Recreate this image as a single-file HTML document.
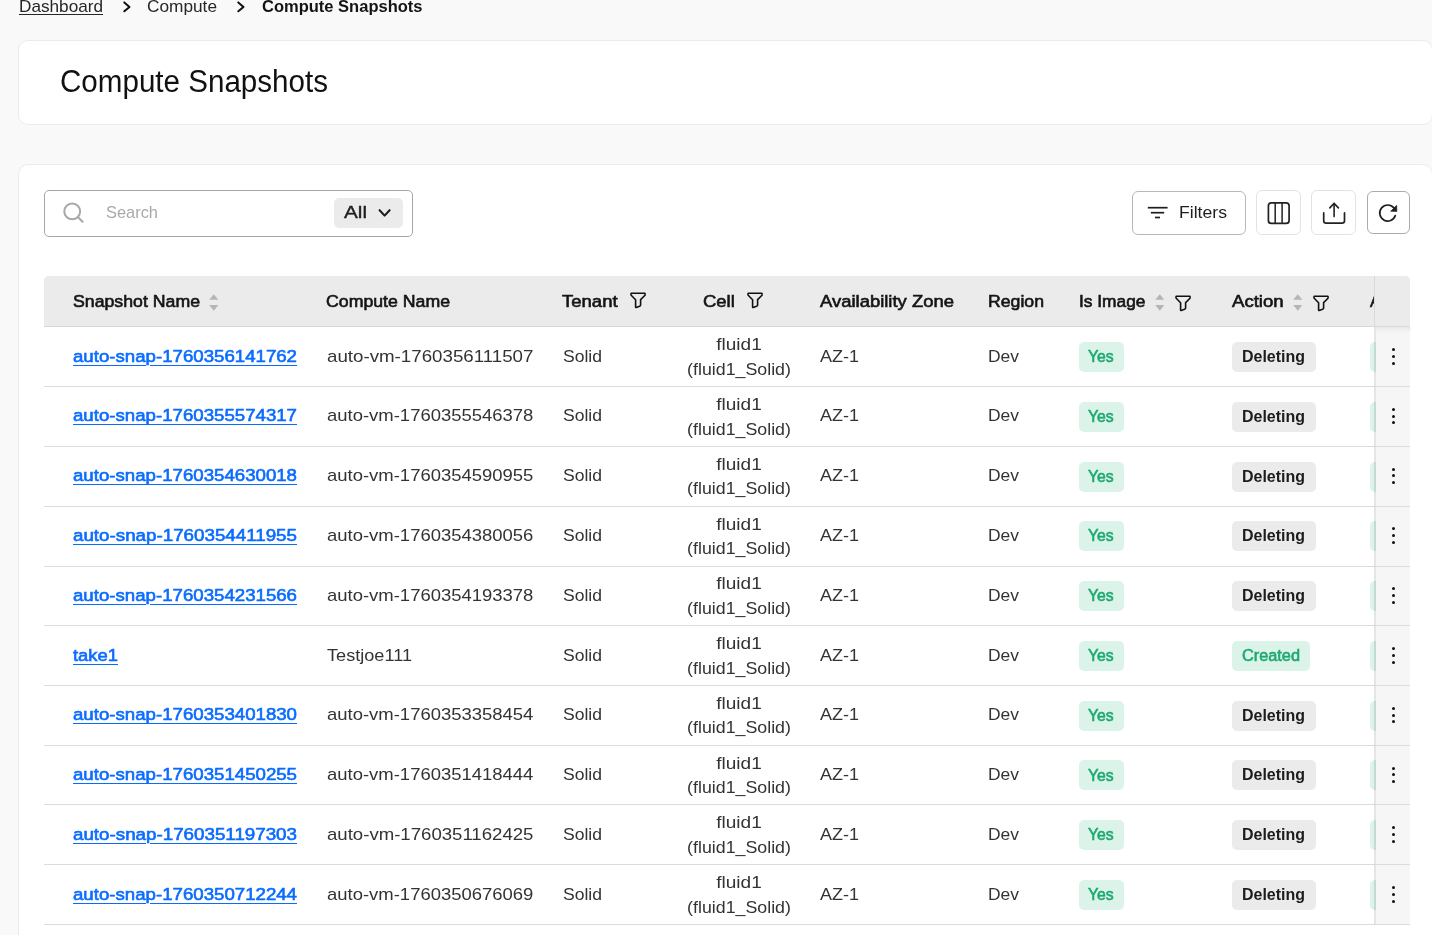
<!DOCTYPE html>
<html><head><meta charset="utf-8"><style>
html,body{margin:0;padding:0}
body{width:1432px;height:935px;overflow:hidden;position:relative;background:#f9f9f9;font-family:"Liberation Sans",sans-serif}
.t{position:absolute;white-space:nowrap;line-height:20px;font-family:"Liberation Sans",sans-serif}
.card{position:absolute;left:18px;width:1413px;background:#fff;border:1px solid #ebebeb;border-radius:10px}
.box{position:absolute;box-sizing:border-box;background:#fff}
.ic{position:absolute;overflow:visible}
.hl{position:absolute;left:44px;width:1331px;height:1px;background:#dcdcdc}
.hl2{position:absolute;left:0;width:34px;height:1px;background:#dcdcdc}
.bd{position:absolute;height:30px;border-radius:5px}
.g{background:#dcf3e9}
.k{background:#ebebeb}
.dot{position:absolute;left:16.2px;width:3px;height:3px;border-radius:50%;background:#111}
</style></head><body>
<svg class="ic" style="left:0;top:0" width="300" height="20"><polyline points="124.3,2.4 129.5,6.9 124.3,11.3" fill="none" stroke="#111" stroke-width="2" stroke-linecap="round" stroke-linejoin="round"/><polyline points="238.3,2.4 243.5,6.9 238.3,11.3" fill="none" stroke="#111" stroke-width="2" stroke-linecap="round" stroke-linejoin="round"/></svg>
<div class="card" style="top:40px;height:83px"></div>
<div class="card" style="top:164px;height:900px"></div>
<!-- search -->
<div class="box" style="left:44px;top:190px;width:369px;height:47px;border:1px solid #a6a6a6;border-radius:5px"></div>
<svg class="ic" style="left:0;top:0" width="100" height="240"><circle cx="72.2" cy="211.4" r="7.9" fill="none" stroke="#a8a8a8" stroke-width="2"/><line x1="78" y1="217.2" x2="82.6" y2="221.8" stroke="#a8a8a8" stroke-width="2" stroke-linecap="round"/></svg>
<div class="box" style="left:334px;top:198px;width:69px;height:30px;background:#ebebeb;border-radius:5px"></div>
<svg class="ic" style="left:370px;top:200px" width="30" height="25"><polyline points="9.6,10.2 14.6,15.6 19.6,10.2" fill="none" stroke="#1e1e1e" stroke-width="2.1" stroke-linecap="round" stroke-linejoin="round"/></svg>
<!-- buttons -->
<div class="box" style="left:1132px;top:191px;width:114px;height:44px;border:1px solid #b8b8b8;border-radius:6px"></div>
<svg class="ic" style="left:1140px;top:200px" width="40" height="25"><line x1="7.8" y1="7.7" x2="27.6" y2="7.7" stroke="#1e1e1e" stroke-width="1.7"/><line x1="10.8" y1="12.7" x2="24.2" y2="12.7" stroke="#1e1e1e" stroke-width="1.7"/><line x1="15" y1="17.5" x2="20" y2="17.5" stroke="#1e1e1e" stroke-width="1.7"/></svg>
<div class="box" style="left:1256px;top:190px;width:45px;height:45px;border:1px solid #e3e3e3;border-radius:6px"></div>
<svg class="ic" style="left:1256px;top:190px" width="45" height="45"><rect x="12.4" y="12.8" width="20.7" height="20.6" rx="3" fill="none" stroke="#222" stroke-width="1.7"/><line x1="19.2" y1="12.8" x2="19.2" y2="33.4" stroke="#222" stroke-width="1.5"/><line x1="26.1" y1="12.8" x2="26.1" y2="33.4" stroke="#222" stroke-width="1.5"/></svg>
<div class="box" style="left:1311px;top:190px;width:45px;height:45px;border:1px solid #e3e3e3;border-radius:6px"></div>
<svg class="ic" style="left:1311px;top:190px" width="45" height="45"><path d="M12.7 22.9 V30.8 Q12.7 33.2 15.2 33.2 H31 Q33.5 33.2 33.5 30.8 V22.9" fill="none" stroke="#222" stroke-width="1.7" stroke-linecap="round"/><line x1="23.1" y1="13.6" x2="23.1" y2="26.6" stroke="#222" stroke-width="1.6" stroke-linecap="round"/><polyline points="18.8,17.9 23.1,13.4 27.4,17.9" fill="none" stroke="#222" stroke-width="1.6" stroke-linecap="round" stroke-linejoin="round"/></svg>
<div class="box" style="left:1367px;top:191px;width:43px;height:43px;border:1px solid #ababab;border-radius:6px"></div>
<svg class="ic" style="left:1367px;top:191px" width="43" height="43"><path d="M26.9 16.9 A8 8 0 1 0 28.3 24.6" fill="none" stroke="#1e1e1e" stroke-width="1.7" stroke-linecap="round"/><path d="M23.6 20.3 L29.9 20.4 L29.7 14.3 Z" fill="#1e1e1e" stroke="#1e1e1e" stroke-width="0.6" stroke-linejoin="round"/></svg>
<!-- table header -->
<div class="box" style="left:44px;top:276px;width:1366px;height:51px;background:#ebebeb;border-radius:5px 5px 0 0;border-bottom:1px solid #d8d8d8"></div>
<svg class="ic" style="left:209px;top:293px" width="10" height="19" viewBox="0 0 10 19"><path d="M0.2 6.7 L4.8 1.2 L9.3 6.7 Z M0.2 12 L4.8 17.7 L9.3 12 Z" fill="#b5b5b5"/></svg><svg class="ic" style="left:1155px;top:293px" width="10" height="19" viewBox="0 0 10 19"><path d="M0.2 6.7 L4.8 1.2 L9.3 6.7 Z M0.2 12 L4.8 17.7 L9.3 12 Z" fill="#b5b5b5"/></svg><svg class="ic" style="left:1293px;top:293px" width="10" height="19" viewBox="0 0 10 19"><path d="M0.2 6.7 L4.8 1.2 L9.3 6.7 Z M0.2 12 L4.8 17.7 L9.3 12 Z" fill="#b5b5b5"/></svg>
<svg class="ic" style="left:629px;top:291px" width="18" height="18" viewBox="0 0 18 18"><path d="M2.2 2.3 H15.8 Q16.4 2.6 16 4.2 L11.6 8.6 V14.2 Q11.5 15 10.6 15.3 L7.2 16.4 Q6.6 16.5 6.6 15.9 V8.7 L2.2 4.3 Q1.6 3 2.2 2.3 Z" fill="none" stroke="#111" stroke-width="1.6" stroke-linejoin="round"/></svg><svg class="ic" style="left:746px;top:291px" width="18" height="18" viewBox="0 0 18 18"><path d="M2.2 2.3 H15.8 Q16.4 2.6 16 4.2 L11.6 8.6 V14.2 Q11.5 15 10.6 15.3 L7.2 16.4 Q6.6 16.5 6.6 15.9 V8.7 L2.2 4.3 Q1.6 3 2.2 2.3 Z" fill="none" stroke="#111" stroke-width="1.6" stroke-linejoin="round"/></svg><svg class="ic" style="left:1174px;top:294.3px" width="18" height="18" viewBox="0 0 18 18"><path d="M2.2 2.3 H15.8 Q16.4 2.6 16 4.2 L11.6 8.6 V14.2 Q11.5 15 10.6 15.3 L7.2 16.4 Q6.6 16.5 6.6 15.9 V8.7 L2.2 4.3 Q1.6 3 2.2 2.3 Z" fill="none" stroke="#111" stroke-width="1.6" stroke-linejoin="round"/></svg><svg class="ic" style="left:1312px;top:294.3px" width="18" height="18" viewBox="0 0 18 18"><path d="M2.2 2.3 H15.8 Q16.4 2.6 16 4.2 L11.6 8.6 V14.2 Q11.5 15 10.6 15.3 L7.2 16.4 Q6.6 16.5 6.6 15.9 V8.7 L2.2 4.3 Q1.6 3 2.2 2.3 Z" fill="none" stroke="#111" stroke-width="1.6" stroke-linejoin="round"/></svg>
<span class="t" style="left:1369.8px;top:291px;font-size:16.4px;font-weight:400;-webkit-text-stroke:0.6px #141414;color:#141414;will-change:transform">A</span>
<!-- rows -->
<div class="hl" style="top:386.00px"></div>
<div class="bd g" style="left:1079px;top:342.00px;width:45px"></div>
<div class="bd k" style="left:1232px;top:342.00px;width:84px"></div>
<div class="bd g" style="left:1370px;top:342.00px;width:40px"></div>
<div class="hl" style="top:446.00px"></div>
<div class="bd g" style="left:1079px;top:401.78px;width:45px"></div>
<div class="bd k" style="left:1232px;top:401.78px;width:84px"></div>
<div class="bd g" style="left:1370px;top:401.78px;width:40px"></div>
<div class="hl" style="top:506.00px"></div>
<div class="bd g" style="left:1079px;top:461.56px;width:45px"></div>
<div class="bd k" style="left:1232px;top:461.56px;width:84px"></div>
<div class="bd g" style="left:1370px;top:461.56px;width:40px"></div>
<div class="hl" style="top:566.00px"></div>
<div class="bd g" style="left:1079px;top:521.34px;width:45px"></div>
<div class="bd k" style="left:1232px;top:521.34px;width:84px"></div>
<div class="bd g" style="left:1370px;top:521.34px;width:40px"></div>
<div class="hl" style="top:625.00px"></div>
<div class="bd g" style="left:1079px;top:581.12px;width:45px"></div>
<div class="bd k" style="left:1232px;top:581.12px;width:84px"></div>
<div class="bd g" style="left:1370px;top:581.12px;width:40px"></div>
<div class="hl" style="top:685.00px"></div>
<div class="bd g" style="left:1079px;top:640.90px;width:45px"></div>
<div class="bd g" style="left:1232px;top:640.90px;width:78px"></div>
<div class="bd g" style="left:1370px;top:640.90px;width:40px"></div>
<div class="hl" style="top:745.00px"></div>
<div class="bd g" style="left:1079px;top:700.68px;width:45px"></div>
<div class="bd k" style="left:1232px;top:700.68px;width:84px"></div>
<div class="bd g" style="left:1370px;top:700.68px;width:40px"></div>
<div class="hl" style="top:804.00px"></div>
<div class="bd g" style="left:1079px;top:760.46px;width:45px"></div>
<div class="bd k" style="left:1232px;top:760.46px;width:84px"></div>
<div class="bd g" style="left:1370px;top:760.46px;width:40px"></div>
<div class="hl" style="top:864.00px"></div>
<div class="bd g" style="left:1079px;top:820.24px;width:45px"></div>
<div class="bd k" style="left:1232px;top:820.24px;width:84px"></div>
<div class="bd g" style="left:1370px;top:820.24px;width:40px"></div>
<div class="hl" style="top:924.00px"></div>
<div class="bd g" style="left:1079px;top:880.02px;width:45px"></div>
<div class="bd k" style="left:1232px;top:880.02px;width:84px"></div>
<div class="bd g" style="left:1370px;top:880.02px;width:40px"></div>
<div style="position:absolute;left:0;top:0;width:1432px;height:935px;will-change:transform"><span class="t tx" style="left:19.20px;top:-3.69px;transform-origin:0 0;font-size:16.4px;font-weight:400;color:#262626;transform:scaleX(1.0475);text-decoration:underline;text-underline-offset:2px;text-decoration-thickness:1px;">Dashboard</span>
<span class="t tx" style="left:147.20px;top:-3.99px;transform-origin:0 0;font-size:16.4px;font-weight:400;color:#262626;transform:scaleX(1.0524);">Compute</span>
<span class="t tx" style="left:262.20px;top:-3.99px;transform-origin:0 0;font-size:16.4px;font-weight:700;color:#141414;transform:scaleX(1.0071);">Compute Snapshots</span>
<span class="t tx" style="left:59.50px;top:71.75px;transform-origin:0 0;font-size:31px;font-weight:400;color:#111;transform:scaleX(0.9541);">Compute Snapshots</span>
<span class="t tx" style="left:105.60px;top:202.41px;transform-origin:0 0;font-size:16.4px;font-weight:400;color:#a9a9a9;transform:scaleX(1.0012);">Search</span>
<span class="t tx" style="left:344.20px;top:203.45px;transform-origin:0 0;font-size:16px;font-weight:400;color:#1e1e1e;transform:scaleX(1.2935);-webkit-text-stroke:0.35px #1e1e1e;">All</span>
<span class="t tx" style="left:1178.50px;top:202.21px;transform-origin:0 0;font-size:16.4px;font-weight:400;color:#1e1e1e;transform:scaleX(1.0756);">Filters</span>
<span class="t tx" style="left:73.20px;top:291.31px;transform-origin:0 0;font-size:16.4px;font-weight:400;color:#141414;transform:scaleX(1.0804);-webkit-text-stroke:0.6px #141414;">Snapshot Name</span>
<span class="t tx" style="left:326.20px;top:291.31px;transform-origin:0 0;font-size:16.4px;font-weight:400;color:#141414;transform:scaleX(1.0802);-webkit-text-stroke:0.6px #141414;">Compute Name</span>
<span class="t tx" style="left:562.20px;top:291.31px;transform-origin:0 0;font-size:16.4px;font-weight:400;color:#141414;transform:scaleX(1.1297);-webkit-text-stroke:0.6px #141414;">Tenant</span>
<span class="t tx" style="left:702.90px;top:291.31px;transform-origin:0 0;font-size:16.4px;font-weight:400;color:#141414;transform:scaleX(1.1257);-webkit-text-stroke:0.6px #141414;">Cell</span>
<span class="t tx" style="left:820.20px;top:291.31px;transform-origin:0 0;font-size:16.4px;font-weight:400;color:#141414;transform:scaleX(1.1255);-webkit-text-stroke:0.6px #141414;">Availability Zone</span>
<span class="t tx" style="left:988.20px;top:291.31px;transform-origin:0 0;font-size:16.4px;font-weight:400;color:#141414;transform:scaleX(1.0779);-webkit-text-stroke:0.6px #141414;">Region</span>
<span class="t tx" style="left:1079.20px;top:291.31px;transform-origin:0 0;font-size:16.4px;font-weight:400;color:#141414;transform:scaleX(1.0563);-webkit-text-stroke:0.6px #141414;">Is Image</span>
<span class="t tx" style="left:1231.80px;top:291.31px;transform-origin:0 0;font-size:16.4px;font-weight:400;color:#141414;transform:scaleX(1.1347);-webkit-text-stroke:0.6px #141414;">Action</span>
<span class="t tx" style="left:73.20px;top:345.61px;transform-origin:0 0;font-size:16.4px;font-weight:400;color:#0a6cff;transform:scaleX(1.1378);text-decoration:underline;text-underline-offset:3px;text-decoration-thickness:1px;-webkit-text-stroke:0.6px #0a6cff;">auto-snap-1760356141762</span>
<span class="t tx" style="left:326.50px;top:345.61px;transform-origin:0 0;font-size:16.4px;font-weight:400;color:#333;transform:scaleX(1.1419);">auto-vm-1760356111507</span>
<span class="t tx" style="left:562.60px;top:345.61px;transform-origin:0 0;font-size:16.4px;font-weight:400;color:#333;transform:scaleX(1.0699);">Solid</span>
<span class="t tx" style="left:738.80px;top:334.21px;transform-origin:0 0;font-size:16.4px;font-weight:400;color:#333;transform:translateX(-50%) scaleX(1.1611);transform-origin:50% 0;">fluid1</span>
<span class="t tx" style="left:738.80px;top:358.81px;transform-origin:0 0;font-size:16.4px;font-weight:400;color:#333;transform:translateX(-50%) scaleX(1.0850);transform-origin:50% 0;">(fluid1_Solid)</span>
<span class="t tx" style="left:820.20px;top:345.61px;transform-origin:0 0;font-size:16.4px;font-weight:400;color:#333;transform:scaleX(1.0976);">AZ-1</span>
<span class="t tx" style="left:988.20px;top:345.61px;transform-origin:0 0;font-size:16.4px;font-weight:400;color:#333;transform:scaleX(1.0632);">Dev</span>
<span class="t tx" style="left:1088.00px;top:347.15px;transform-origin:0 0;font-size:16px;font-weight:400;color:#1fa971;transform:scaleX(0.9843);-webkit-text-stroke:0.6px #1fa971;">Yes</span>
<span class="t tx" style="left:1242.00px;top:346.95px;transform-origin:0 0;font-size:16px;font-weight:700;color:#1c1c1c;transform:scaleX(0.9980);">Deleting</span>
<span class="t tx" style="left:73.20px;top:405.39px;transform-origin:0 0;font-size:16.4px;font-weight:400;color:#0a6cff;transform:scaleX(1.1378);text-decoration:underline;text-underline-offset:3px;text-decoration-thickness:1px;-webkit-text-stroke:0.6px #0a6cff;">auto-snap-1760355574317</span>
<span class="t tx" style="left:326.50px;top:405.39px;transform-origin:0 0;font-size:16.4px;font-weight:400;color:#333;transform:scaleX(1.1268);">auto-vm-1760355546378</span>
<span class="t tx" style="left:562.60px;top:405.39px;transform-origin:0 0;font-size:16.4px;font-weight:400;color:#333;transform:scaleX(1.0699);">Solid</span>
<span class="t tx" style="left:738.80px;top:393.99px;transform-origin:0 0;font-size:16.4px;font-weight:400;color:#333;transform:translateX(-50%) scaleX(1.1611);transform-origin:50% 0;">fluid1</span>
<span class="t tx" style="left:738.80px;top:418.59px;transform-origin:0 0;font-size:16.4px;font-weight:400;color:#333;transform:translateX(-50%) scaleX(1.0850);transform-origin:50% 0;">(fluid1_Solid)</span>
<span class="t tx" style="left:820.20px;top:405.39px;transform-origin:0 0;font-size:16.4px;font-weight:400;color:#333;transform:scaleX(1.0976);">AZ-1</span>
<span class="t tx" style="left:988.20px;top:405.39px;transform-origin:0 0;font-size:16.4px;font-weight:400;color:#333;transform:scaleX(1.0632);">Dev</span>
<span class="t tx" style="left:1088.00px;top:406.93px;transform-origin:0 0;font-size:16px;font-weight:400;color:#1fa971;transform:scaleX(0.9843);-webkit-text-stroke:0.6px #1fa971;">Yes</span>
<span class="t tx" style="left:1242.00px;top:406.73px;transform-origin:0 0;font-size:16px;font-weight:700;color:#1c1c1c;transform:scaleX(0.9980);">Deleting</span>
<span class="t tx" style="left:73.20px;top:465.17px;transform-origin:0 0;font-size:16.4px;font-weight:400;color:#0a6cff;transform:scaleX(1.1378);text-decoration:underline;text-underline-offset:3px;text-decoration-thickness:1px;-webkit-text-stroke:0.6px #0a6cff;">auto-snap-1760354630018</span>
<span class="t tx" style="left:326.50px;top:465.17px;transform-origin:0 0;font-size:16.4px;font-weight:400;color:#333;transform:scaleX(1.1268);">auto-vm-1760354590955</span>
<span class="t tx" style="left:562.60px;top:465.17px;transform-origin:0 0;font-size:16.4px;font-weight:400;color:#333;transform:scaleX(1.0699);">Solid</span>
<span class="t tx" style="left:738.80px;top:453.77px;transform-origin:0 0;font-size:16.4px;font-weight:400;color:#333;transform:translateX(-50%) scaleX(1.1611);transform-origin:50% 0;">fluid1</span>
<span class="t tx" style="left:738.80px;top:478.37px;transform-origin:0 0;font-size:16.4px;font-weight:400;color:#333;transform:translateX(-50%) scaleX(1.0850);transform-origin:50% 0;">(fluid1_Solid)</span>
<span class="t tx" style="left:820.20px;top:465.17px;transform-origin:0 0;font-size:16.4px;font-weight:400;color:#333;transform:scaleX(1.0976);">AZ-1</span>
<span class="t tx" style="left:988.20px;top:465.17px;transform-origin:0 0;font-size:16.4px;font-weight:400;color:#333;transform:scaleX(1.0632);">Dev</span>
<span class="t tx" style="left:1088.00px;top:466.71px;transform-origin:0 0;font-size:16px;font-weight:400;color:#1fa971;transform:scaleX(0.9843);-webkit-text-stroke:0.6px #1fa971;">Yes</span>
<span class="t tx" style="left:1242.00px;top:466.51px;transform-origin:0 0;font-size:16px;font-weight:700;color:#1c1c1c;transform:scaleX(0.9980);">Deleting</span>
<span class="t tx" style="left:73.20px;top:524.95px;transform-origin:0 0;font-size:16.4px;font-weight:400;color:#0a6cff;transform:scaleX(1.1449);text-decoration:underline;text-underline-offset:3px;text-decoration-thickness:1px;-webkit-text-stroke:0.6px #0a6cff;">auto-snap-1760354411955</span>
<span class="t tx" style="left:326.50px;top:524.95px;transform-origin:0 0;font-size:16.4px;font-weight:400;color:#333;transform:scaleX(1.1268);">auto-vm-1760354380056</span>
<span class="t tx" style="left:562.60px;top:524.95px;transform-origin:0 0;font-size:16.4px;font-weight:400;color:#333;transform:scaleX(1.0699);">Solid</span>
<span class="t tx" style="left:738.80px;top:513.55px;transform-origin:0 0;font-size:16.4px;font-weight:400;color:#333;transform:translateX(-50%) scaleX(1.1611);transform-origin:50% 0;">fluid1</span>
<span class="t tx" style="left:738.80px;top:538.15px;transform-origin:0 0;font-size:16.4px;font-weight:400;color:#333;transform:translateX(-50%) scaleX(1.0850);transform-origin:50% 0;">(fluid1_Solid)</span>
<span class="t tx" style="left:820.20px;top:524.95px;transform-origin:0 0;font-size:16.4px;font-weight:400;color:#333;transform:scaleX(1.0976);">AZ-1</span>
<span class="t tx" style="left:988.20px;top:524.95px;transform-origin:0 0;font-size:16.4px;font-weight:400;color:#333;transform:scaleX(1.0632);">Dev</span>
<span class="t tx" style="left:1088.00px;top:526.49px;transform-origin:0 0;font-size:16px;font-weight:400;color:#1fa971;transform:scaleX(0.9843);-webkit-text-stroke:0.6px #1fa971;">Yes</span>
<span class="t tx" style="left:1242.00px;top:526.29px;transform-origin:0 0;font-size:16px;font-weight:700;color:#1c1c1c;transform:scaleX(0.9980);">Deleting</span>
<span class="t tx" style="left:73.20px;top:584.73px;transform-origin:0 0;font-size:16.4px;font-weight:400;color:#0a6cff;transform:scaleX(1.1378);text-decoration:underline;text-underline-offset:3px;text-decoration-thickness:1px;-webkit-text-stroke:0.6px #0a6cff;">auto-snap-1760354231566</span>
<span class="t tx" style="left:326.50px;top:584.73px;transform-origin:0 0;font-size:16.4px;font-weight:400;color:#333;transform:scaleX(1.1268);">auto-vm-1760354193378</span>
<span class="t tx" style="left:562.60px;top:584.73px;transform-origin:0 0;font-size:16.4px;font-weight:400;color:#333;transform:scaleX(1.0699);">Solid</span>
<span class="t tx" style="left:738.80px;top:573.33px;transform-origin:0 0;font-size:16.4px;font-weight:400;color:#333;transform:translateX(-50%) scaleX(1.1611);transform-origin:50% 0;">fluid1</span>
<span class="t tx" style="left:738.80px;top:597.93px;transform-origin:0 0;font-size:16.4px;font-weight:400;color:#333;transform:translateX(-50%) scaleX(1.0850);transform-origin:50% 0;">(fluid1_Solid)</span>
<span class="t tx" style="left:820.20px;top:584.73px;transform-origin:0 0;font-size:16.4px;font-weight:400;color:#333;transform:scaleX(1.0976);">AZ-1</span>
<span class="t tx" style="left:988.20px;top:584.73px;transform-origin:0 0;font-size:16.4px;font-weight:400;color:#333;transform:scaleX(1.0632);">Dev</span>
<span class="t tx" style="left:1088.00px;top:586.27px;transform-origin:0 0;font-size:16px;font-weight:400;color:#1fa971;transform:scaleX(0.9843);-webkit-text-stroke:0.6px #1fa971;">Yes</span>
<span class="t tx" style="left:1242.00px;top:586.07px;transform-origin:0 0;font-size:16px;font-weight:700;color:#1c1c1c;transform:scaleX(0.9980);">Deleting</span>
<span class="t tx" style="left:73.20px;top:644.51px;transform-origin:0 0;font-size:16.4px;font-weight:400;color:#0a6cff;transform:scaleX(1.1219);text-decoration:underline;text-underline-offset:3px;text-decoration-thickness:1px;-webkit-text-stroke:0.6px #0a6cff;">take1</span>
<span class="t tx" style="left:326.50px;top:644.51px;transform-origin:0 0;font-size:16.4px;font-weight:400;color:#333;transform:scaleX(1.1059);">Testjoe111</span>
<span class="t tx" style="left:562.60px;top:644.51px;transform-origin:0 0;font-size:16.4px;font-weight:400;color:#333;transform:scaleX(1.0699);">Solid</span>
<span class="t tx" style="left:738.80px;top:633.11px;transform-origin:0 0;font-size:16.4px;font-weight:400;color:#333;transform:translateX(-50%) scaleX(1.1611);transform-origin:50% 0;">fluid1</span>
<span class="t tx" style="left:738.80px;top:657.71px;transform-origin:0 0;font-size:16.4px;font-weight:400;color:#333;transform:translateX(-50%) scaleX(1.0850);transform-origin:50% 0;">(fluid1_Solid)</span>
<span class="t tx" style="left:820.20px;top:644.51px;transform-origin:0 0;font-size:16.4px;font-weight:400;color:#333;transform:scaleX(1.0976);">AZ-1</span>
<span class="t tx" style="left:988.20px;top:644.51px;transform-origin:0 0;font-size:16.4px;font-weight:400;color:#333;transform:scaleX(1.0632);">Dev</span>
<span class="t tx" style="left:1088.00px;top:646.05px;transform-origin:0 0;font-size:16px;font-weight:400;color:#1fa971;transform:scaleX(0.9843);-webkit-text-stroke:0.6px #1fa971;">Yes</span>
<span class="t tx" style="left:1242.00px;top:645.85px;transform-origin:0 0;font-size:16px;font-weight:400;color:#1fa971;transform:scaleX(1.0189);-webkit-text-stroke:0.6px #1fa971;">Created</span>
<span class="t tx" style="left:73.20px;top:704.29px;transform-origin:0 0;font-size:16.4px;font-weight:400;color:#0a6cff;transform:scaleX(1.1378);text-decoration:underline;text-underline-offset:3px;text-decoration-thickness:1px;-webkit-text-stroke:0.6px #0a6cff;">auto-snap-1760353401830</span>
<span class="t tx" style="left:326.50px;top:704.29px;transform-origin:0 0;font-size:16.4px;font-weight:400;color:#333;transform:scaleX(1.1268);">auto-vm-1760353358454</span>
<span class="t tx" style="left:562.60px;top:704.29px;transform-origin:0 0;font-size:16.4px;font-weight:400;color:#333;transform:scaleX(1.0699);">Solid</span>
<span class="t tx" style="left:738.80px;top:692.89px;transform-origin:0 0;font-size:16.4px;font-weight:400;color:#333;transform:translateX(-50%) scaleX(1.1611);transform-origin:50% 0;">fluid1</span>
<span class="t tx" style="left:738.80px;top:717.49px;transform-origin:0 0;font-size:16.4px;font-weight:400;color:#333;transform:translateX(-50%) scaleX(1.0850);transform-origin:50% 0;">(fluid1_Solid)</span>
<span class="t tx" style="left:820.20px;top:704.29px;transform-origin:0 0;font-size:16.4px;font-weight:400;color:#333;transform:scaleX(1.0976);">AZ-1</span>
<span class="t tx" style="left:988.20px;top:704.29px;transform-origin:0 0;font-size:16.4px;font-weight:400;color:#333;transform:scaleX(1.0632);">Dev</span>
<span class="t tx" style="left:1088.00px;top:705.83px;transform-origin:0 0;font-size:16px;font-weight:400;color:#1fa971;transform:scaleX(0.9843);-webkit-text-stroke:0.6px #1fa971;">Yes</span>
<span class="t tx" style="left:1242.00px;top:705.63px;transform-origin:0 0;font-size:16px;font-weight:700;color:#1c1c1c;transform:scaleX(0.9980);">Deleting</span>
<span class="t tx" style="left:73.20px;top:764.07px;transform-origin:0 0;font-size:16.4px;font-weight:400;color:#0a6cff;transform:scaleX(1.1378);text-decoration:underline;text-underline-offset:3px;text-decoration-thickness:1px;-webkit-text-stroke:0.6px #0a6cff;">auto-snap-1760351450255</span>
<span class="t tx" style="left:326.50px;top:764.07px;transform-origin:0 0;font-size:16.4px;font-weight:400;color:#333;transform:scaleX(1.1268);">auto-vm-1760351418444</span>
<span class="t tx" style="left:562.60px;top:764.07px;transform-origin:0 0;font-size:16.4px;font-weight:400;color:#333;transform:scaleX(1.0699);">Solid</span>
<span class="t tx" style="left:738.80px;top:752.67px;transform-origin:0 0;font-size:16.4px;font-weight:400;color:#333;transform:translateX(-50%) scaleX(1.1611);transform-origin:50% 0;">fluid1</span>
<span class="t tx" style="left:738.80px;top:777.27px;transform-origin:0 0;font-size:16.4px;font-weight:400;color:#333;transform:translateX(-50%) scaleX(1.0850);transform-origin:50% 0;">(fluid1_Solid)</span>
<span class="t tx" style="left:820.20px;top:764.07px;transform-origin:0 0;font-size:16.4px;font-weight:400;color:#333;transform:scaleX(1.0976);">AZ-1</span>
<span class="t tx" style="left:988.20px;top:764.07px;transform-origin:0 0;font-size:16.4px;font-weight:400;color:#333;transform:scaleX(1.0632);">Dev</span>
<span class="t tx" style="left:1088.00px;top:765.61px;transform-origin:0 0;font-size:16px;font-weight:400;color:#1fa971;transform:scaleX(0.9843);-webkit-text-stroke:0.6px #1fa971;">Yes</span>
<span class="t tx" style="left:1242.00px;top:765.41px;transform-origin:0 0;font-size:16px;font-weight:700;color:#1c1c1c;transform:scaleX(0.9980);">Deleting</span>
<span class="t tx" style="left:73.20px;top:823.85px;transform-origin:0 0;font-size:16.4px;font-weight:400;color:#0a6cff;transform:scaleX(1.1449);text-decoration:underline;text-underline-offset:3px;text-decoration-thickness:1px;-webkit-text-stroke:0.6px #0a6cff;">auto-snap-1760351197303</span>
<span class="t tx" style="left:326.50px;top:823.85px;transform-origin:0 0;font-size:16.4px;font-weight:400;color:#333;transform:scaleX(1.1344);">auto-vm-1760351162425</span>
<span class="t tx" style="left:562.60px;top:823.85px;transform-origin:0 0;font-size:16.4px;font-weight:400;color:#333;transform:scaleX(1.0699);">Solid</span>
<span class="t tx" style="left:738.80px;top:812.45px;transform-origin:0 0;font-size:16.4px;font-weight:400;color:#333;transform:translateX(-50%) scaleX(1.1611);transform-origin:50% 0;">fluid1</span>
<span class="t tx" style="left:738.80px;top:837.05px;transform-origin:0 0;font-size:16.4px;font-weight:400;color:#333;transform:translateX(-50%) scaleX(1.0850);transform-origin:50% 0;">(fluid1_Solid)</span>
<span class="t tx" style="left:820.20px;top:823.85px;transform-origin:0 0;font-size:16.4px;font-weight:400;color:#333;transform:scaleX(1.0976);">AZ-1</span>
<span class="t tx" style="left:988.20px;top:823.85px;transform-origin:0 0;font-size:16.4px;font-weight:400;color:#333;transform:scaleX(1.0632);">Dev</span>
<span class="t tx" style="left:1088.00px;top:825.39px;transform-origin:0 0;font-size:16px;font-weight:400;color:#1fa971;transform:scaleX(0.9843);-webkit-text-stroke:0.6px #1fa971;">Yes</span>
<span class="t tx" style="left:1242.00px;top:825.19px;transform-origin:0 0;font-size:16px;font-weight:700;color:#1c1c1c;transform:scaleX(0.9980);">Deleting</span>
<span class="t tx" style="left:73.20px;top:883.63px;transform-origin:0 0;font-size:16.4px;font-weight:400;color:#0a6cff;transform:scaleX(1.1378);text-decoration:underline;text-underline-offset:3px;text-decoration-thickness:1px;-webkit-text-stroke:0.6px #0a6cff;">auto-snap-1760350712244</span>
<span class="t tx" style="left:326.50px;top:883.63px;transform-origin:0 0;font-size:16.4px;font-weight:400;color:#333;transform:scaleX(1.1268);">auto-vm-1760350676069</span>
<span class="t tx" style="left:562.60px;top:883.63px;transform-origin:0 0;font-size:16.4px;font-weight:400;color:#333;transform:scaleX(1.0699);">Solid</span>
<span class="t tx" style="left:738.80px;top:872.23px;transform-origin:0 0;font-size:16.4px;font-weight:400;color:#333;transform:translateX(-50%) scaleX(1.1611);transform-origin:50% 0;">fluid1</span>
<span class="t tx" style="left:738.80px;top:896.83px;transform-origin:0 0;font-size:16.4px;font-weight:400;color:#333;transform:translateX(-50%) scaleX(1.0850);transform-origin:50% 0;">(fluid1_Solid)</span>
<span class="t tx" style="left:820.20px;top:883.63px;transform-origin:0 0;font-size:16.4px;font-weight:400;color:#333;transform:scaleX(1.0976);">AZ-1</span>
<span class="t tx" style="left:988.20px;top:883.63px;transform-origin:0 0;font-size:16.4px;font-weight:400;color:#333;transform:scaleX(1.0632);">Dev</span>
<span class="t tx" style="left:1088.00px;top:885.17px;transform-origin:0 0;font-size:16px;font-weight:400;color:#1fa971;transform:scaleX(0.9843);-webkit-text-stroke:0.6px #1fa971;">Yes</span>
<span class="t tx" style="left:1242.00px;top:884.97px;transform-origin:0 0;font-size:16px;font-weight:700;color:#1c1c1c;transform:scaleX(0.9980);">Deleting</span></div>
<!-- sticky col -->
<div class="box" style="left:1374px;top:276px;width:36px;height:51px;background:#ebebeb;border-left:1px solid #d9d9d9;border-radius:0 5px 0 0;border-bottom:1px solid #d8d8d8"></div>
<div class="box" style="left:1376px;top:327px;width:34px;height:598px;background:#f6f6f6;box-shadow:-2px 0 0 rgba(0,0,0,0.1)">
<div style="position:absolute;left:0;top:0;width:35px;height:6px;background:linear-gradient(rgba(0,0,0,0.05),rgba(0,0,0,0))"></div>
<div class="hl2" style="top:59px"></div><div class="hl2" style="top:119px"></div><div class="hl2" style="top:179px"></div><div class="hl2" style="top:239px"></div><div class="hl2" style="top:298px"></div><div class="hl2" style="top:358px"></div><div class="hl2" style="top:418px"></div><div class="hl2" style="top:477px"></div><div class="hl2" style="top:537px"></div><div class="hl2" style="top:597px"></div>
<div class="dot" style="top:21.10px"></div><div class="dot" style="top:27.85px"></div><div class="dot" style="top:34.60px"></div><div class="dot" style="top:80.88px"></div><div class="dot" style="top:87.63px"></div><div class="dot" style="top:94.38px"></div><div class="dot" style="top:140.66px"></div><div class="dot" style="top:147.41px"></div><div class="dot" style="top:154.16px"></div><div class="dot" style="top:200.44px"></div><div class="dot" style="top:207.19px"></div><div class="dot" style="top:213.94px"></div><div class="dot" style="top:260.22px"></div><div class="dot" style="top:266.97px"></div><div class="dot" style="top:273.72px"></div><div class="dot" style="top:320.00px"></div><div class="dot" style="top:326.75px"></div><div class="dot" style="top:333.50px"></div><div class="dot" style="top:379.78px"></div><div class="dot" style="top:386.53px"></div><div class="dot" style="top:393.28px"></div><div class="dot" style="top:439.56px"></div><div class="dot" style="top:446.31px"></div><div class="dot" style="top:453.06px"></div><div class="dot" style="top:499.34px"></div><div class="dot" style="top:506.09px"></div><div class="dot" style="top:512.84px"></div><div class="dot" style="top:559.12px"></div><div class="dot" style="top:565.87px"></div><div class="dot" style="top:572.62px"></div>
</div>
</body></html>
